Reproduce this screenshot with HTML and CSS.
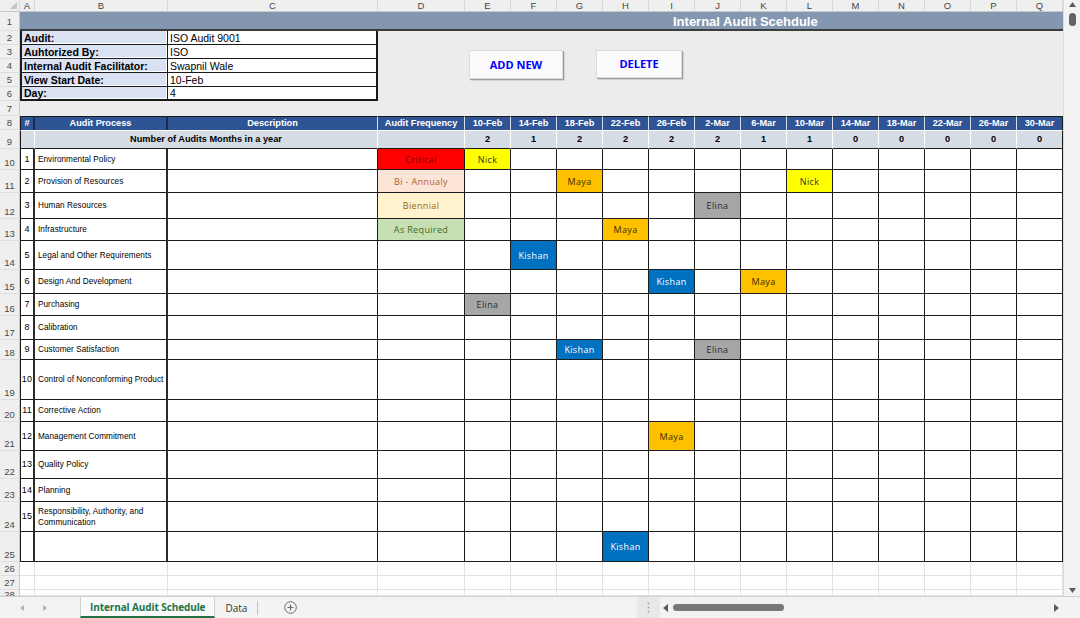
FILE: index.html
```html
<!DOCTYPE html>
<html lang="en">
<head>
<meta charset="utf-8">
<title>Internal Audit Schedule</title>
<link rel="stylesheet" href="styles.css">
</head>
<body>
<div class="app">
  <div class="main">
    <div class="sheet">
      <div class="row">
        <div class="corner"></div>
        <div class="ch">A</div><div class="ch">B</div><div class="ch">C</div><div class="ch">D</div>
        <div class="ch">E</div><div class="ch">F</div><div class="ch">G</div><div class="ch">H</div>
        <div class="ch">I</div><div class="ch">J</div><div class="ch">K</div><div class="ch">L</div>
        <div class="ch">M</div><div class="ch">N</div><div class="ch">O</div><div class="ch">P</div><div class="ch">Q</div>
      </div>

      <div class="row">
        <div class="rh mid">1</div>
        <div class="title">Internal Audit Scehdule</div>
      </div>

      <div class="row">
        <div class="rh">2</div>
        <div class="lbl">Audit:</div><div class="val">ISO Audit 9001</div><div class="fill"></div>
      </div>
      <div class="row">
        <div class="rh">3</div>
        <div class="lbl">Auhtorized By:</div><div class="val">ISO</div><div class="fill"></div>
      </div>
      <div class="row">
        <div class="rh">4</div>
        <div class="lbl">Internal Audit Facilitator:</div><div class="val">Swapnil Wale</div><div class="fill"></div>
      </div>
      <div class="row">
        <div class="rh">5</div>
        <div class="lbl">View Start Date:</div><div class="val">10-Feb</div><div class="fill"></div>
      </div>
      <div class="row">
        <div class="rh">6</div>
        <div class="lbl last">Day:</div><div class="val last">4</div><div class="fill"></div>
      </div>
      <div class="row">
        <div class="rh">7</div>
        <div class="fill all"></div>
      </div>

      <div class="row">
        <div class="rh">8</div>
        <div class="h first dk">#</div>
        <div class="h dk">Audit Process</div>
        <div class="h">Description</div>
        <div class="h">Audit Frequency</div>
        <div class="h">10-Feb</div><div class="h">14-Feb</div><div class="h">18-Feb</div><div class="h">22-Feb</div>
        <div class="h">26-Feb</div><div class="h">2-Mar</div><div class="h">6-Mar</div><div class="h">10-Mar</div>
        <div class="h">14-Mar</div><div class="h">18-Mar</div><div class="h">22-Mar</div><div class="h">26-Mar</div>
        <div class="h endc">30-Mar</div>
      </div>

      <div class="row">
        <div class="rh">9</div>
        <div class="s first"></div>
        <div class="s wide">Number of Audits Months in a year</div>
        <div class="s"></div>
        <div class="s">2</div><div class="s">1</div><div class="s">2</div><div class="s">2</div>
        <div class="s">2</div><div class="s">2</div><div class="s">1</div><div class="s">1</div>
        <div class="s">0</div><div class="s">0</div><div class="s">0</div><div class="s">0</div>
        <div class="s endc">0</div>
      </div>

      <div class="row">
        <div class="rh">10</div>
        <div class="d num">1</div><div class="d proc">Environmental Policy</div><div class="d desc"></div>
        <div class="d fq crit">Critical</div>
        <div class="d nm nick">Nick</div><div class="d"></div><div class="d"></div><div class="d"></div>
        <div class="d"></div><div class="d"></div><div class="d"></div><div class="d"></div>
        <div class="d"></div><div class="d"></div><div class="d"></div><div class="d"></div><div class="d endc"></div>
      </div>

      <div class="row">
        <div class="rh">11</div>
        <div class="d num">2</div><div class="d proc">Provision of Resources</div><div class="d desc"></div>
        <div class="d fq bi">Bi - Annualy</div>
        <div class="d"></div><div class="d"></div><div class="d nm maya">Maya</div><div class="d"></div>
        <div class="d"></div><div class="d"></div><div class="d"></div><div class="d nm nick">Nick</div>
        <div class="d"></div><div class="d"></div><div class="d"></div><div class="d"></div><div class="d endc"></div>
      </div>

      <div class="row">
        <div class="rh">12</div>
        <div class="d num">3</div><div class="d proc">Human Resources</div><div class="d desc"></div>
        <div class="d fq bien">Biennial</div>
        <div class="d"></div><div class="d"></div><div class="d"></div><div class="d"></div>
        <div class="d"></div><div class="d nm elina">Elina</div><div class="d"></div><div class="d"></div>
        <div class="d"></div><div class="d"></div><div class="d"></div><div class="d"></div><div class="d endc"></div>
      </div>

      <div class="row">
        <div class="rh">13</div>
        <div class="d num">4</div><div class="d proc">Infrastructure</div><div class="d desc"></div>
        <div class="d fq asreq">As Required</div>
        <div class="d"></div><div class="d"></div><div class="d"></div><div class="d nm maya">Maya</div>
        <div class="d"></div><div class="d"></div><div class="d"></div><div class="d"></div>
        <div class="d"></div><div class="d"></div><div class="d"></div><div class="d"></div><div class="d endc"></div>
      </div>

      <div class="row">
        <div class="rh">14</div>
        <div class="d num">5</div><div class="d proc">Legal and Other Requirements</div><div class="d desc"></div>
        <div class="d"></div>
        <div class="d"></div><div class="d nm kishan">Kishan</div><div class="d"></div><div class="d"></div>
        <div class="d"></div><div class="d"></div><div class="d"></div><div class="d"></div>
        <div class="d"></div><div class="d"></div><div class="d"></div><div class="d"></div><div class="d endc"></div>
      </div>

      <div class="row">
        <div class="rh">15</div>
        <div class="d num">6</div><div class="d proc">Design And Development</div><div class="d desc"></div>
        <div class="d"></div>
        <div class="d"></div><div class="d"></div><div class="d"></div><div class="d"></div>
        <div class="d nm kishan">Kishan</div><div class="d"></div><div class="d nm maya">Maya</div><div class="d"></div>
        <div class="d"></div><div class="d"></div><div class="d"></div><div class="d"></div><div class="d endc"></div>
      </div>

      <div class="row">
        <div class="rh">16</div>
        <div class="d num">7</div><div class="d proc">Purchasing</div><div class="d desc"></div>
        <div class="d"></div>
        <div class="d nm elina">Elina</div><div class="d"></div><div class="d"></div><div class="d"></div>
        <div class="d"></div><div class="d"></div><div class="d"></div><div class="d"></div>
        <div class="d"></div><div class="d"></div><div class="d"></div><div class="d"></div><div class="d endc"></div>
      </div>

      <div class="row">
        <div class="rh">17</div>
        <div class="d num">8</div><div class="d proc">Calibration</div><div class="d desc"></div>
        <div class="d"></div>
        <div class="d"></div><div class="d"></div><div class="d"></div><div class="d"></div>
        <div class="d"></div><div class="d"></div><div class="d"></div><div class="d"></div>
        <div class="d"></div><div class="d"></div><div class="d"></div><div class="d"></div><div class="d endc"></div>
      </div>

      <div class="row">
        <div class="rh">18</div>
        <div class="d num">9</div><div class="d proc">Customer Satisfaction</div><div class="d desc"></div>
        <div class="d"></div>
        <div class="d"></div><div class="d"></div><div class="d nm kishan">Kishan</div><div class="d"></div>
        <div class="d"></div><div class="d nm elina">Elina</div><div class="d"></div><div class="d"></div>
        <div class="d"></div><div class="d"></div><div class="d"></div><div class="d"></div><div class="d endc"></div>
      </div>

      <div class="row">
        <div class="rh">19</div>
        <div class="d num">10</div><div class="d proc">Control of Nonconforming Product</div><div class="d desc"></div>
        <div class="d"></div>
        <div class="d"></div><div class="d"></div><div class="d"></div><div class="d"></div>
        <div class="d"></div><div class="d"></div><div class="d"></div><div class="d"></div>
        <div class="d"></div><div class="d"></div><div class="d"></div><div class="d"></div><div class="d endc"></div>
      </div>

      <div class="row">
        <div class="rh">20</div>
        <div class="d num">11</div><div class="d proc">Corrective Action</div><div class="d desc"></div>
        <div class="d"></div>
        <div class="d"></div><div class="d"></div><div class="d"></div><div class="d"></div>
        <div class="d"></div><div class="d"></div><div class="d"></div><div class="d"></div>
        <div class="d"></div><div class="d"></div><div class="d"></div><div class="d"></div><div class="d endc"></div>
      </div>

      <div class="row">
        <div class="rh">21</div>
        <div class="d num">12</div><div class="d proc">Management Commitment</div><div class="d desc"></div>
        <div class="d"></div>
        <div class="d"></div><div class="d"></div><div class="d"></div><div class="d"></div>
        <div class="d nm maya">Maya</div><div class="d"></div><div class="d"></div><div class="d"></div>
        <div class="d"></div><div class="d"></div><div class="d"></div><div class="d"></div><div class="d endc"></div>
      </div>

      <div class="row">
        <div class="rh">22</div>
        <div class="d num">13</div><div class="d proc">Quality Policy</div><div class="d desc"></div>
        <div class="d"></div>
        <div class="d"></div><div class="d"></div><div class="d"></div><div class="d"></div>
        <div class="d"></div><div class="d"></div><div class="d"></div><div class="d"></div>
        <div class="d"></div><div class="d"></div><div class="d"></div><div class="d"></div><div class="d endc"></div>
      </div>

      <div class="row">
        <div class="rh">23</div>
        <div class="d num">14</div><div class="d proc">Planning</div><div class="d desc"></div>
        <div class="d"></div>
        <div class="d"></div><div class="d"></div><div class="d"></div><div class="d"></div>
        <div class="d"></div><div class="d"></div><div class="d"></div><div class="d"></div>
        <div class="d"></div><div class="d"></div><div class="d"></div><div class="d"></div><div class="d endc"></div>
      </div>

      <div class="row">
        <div class="rh">24</div>
        <div class="d num">15</div><div class="d proc">Responsibility, Authority, and Communication</div><div class="d desc"></div>
        <div class="d"></div>
        <div class="d"></div><div class="d"></div><div class="d"></div><div class="d"></div>
        <div class="d"></div><div class="d"></div><div class="d"></div><div class="d"></div>
        <div class="d"></div><div class="d"></div><div class="d"></div><div class="d"></div><div class="d endc"></div>
      </div>

      <div class="row">
        <div class="rh">25</div>
        <div class="d num"></div><div class="d proc"></div><div class="d desc"></div>
        <div class="d"></div>
        <div class="d"></div><div class="d"></div><div class="d"></div><div class="d nm kishan">Kishan</div>
        <div class="d"></div><div class="d"></div><div class="d"></div><div class="d"></div>
        <div class="d"></div><div class="d"></div><div class="d"></div><div class="d"></div><div class="d endc"></div>
      </div>

      <div class="row">
        <div class="rh">26</div>
        <div class="e"></div><div class="e"></div><div class="e"></div><div class="e"></div>
        <div class="e"></div><div class="e"></div><div class="e"></div><div class="e"></div>
        <div class="e"></div><div class="e"></div><div class="e"></div><div class="e"></div>
        <div class="e"></div><div class="e"></div><div class="e"></div><div class="e"></div><div class="e"></div>
      </div>
      <div class="row">
        <div class="rh">27</div>
        <div class="e"></div><div class="e"></div><div class="e"></div><div class="e"></div>
        <div class="e"></div><div class="e"></div><div class="e"></div><div class="e"></div>
        <div class="e"></div><div class="e"></div><div class="e"></div><div class="e"></div>
        <div class="e"></div><div class="e"></div><div class="e"></div><div class="e"></div><div class="e"></div>
      </div>
      <div class="row">
        <div class="rh top">28</div>
        <div class="e"></div><div class="e"></div><div class="e"></div><div class="e"></div>
        <div class="e"></div><div class="e"></div><div class="e"></div><div class="e"></div>
        <div class="e"></div><div class="e"></div><div class="e"></div><div class="e"></div>
        <div class="e"></div><div class="e"></div><div class="e"></div><div class="e"></div><div class="e"></div>
      </div>

      <button class="btn btn-add" type="button">ADD NEW</button>
      <button class="btn btn-del" type="button">DELETE</button>
    </div>

    <div class="vscroll">
      <svg class="varrow" width="7" height="5" viewBox="0 0 7 5"><path d="M3.5 0L7 5H0z"/></svg>
      <div class="vthumb"></div>
      <div class="vspace"></div>
      <svg class="varrow" width="7" height="5" viewBox="0 0 7 5"><path d="M0 0H7L3.5 5z"/></svg>
    </div>
  </div>

  <div class="tabbar">
    <div class="tabs">
      <div class="nav">
        <svg width="4" height="6" viewBox="0 0 4 6"><path d="M4 0V6L0 3z"/></svg>
        <svg width="4" height="6" viewBox="0 0 4 6"><path d="M0 0V6L4 3z"/></svg>
      </div>
      <div class="tab active">Internal Audit Schedule</div>
      <div class="tab">Data</div>
      <div class="tabsep"></div>
      <svg class="addsheet" width="13" height="13" viewBox="0 0 13 13">
        <circle cx="6.5" cy="6.5" r="5.8" fill="none" stroke="#6b6b6b" stroke-width="1"/>
        <path d="M6.5 3.5V9.5M3.5 6.5H9.5" stroke="#6b6b6b" stroke-width="1.2"/>
      </svg>
    </div>
    <div class="splitter">
      <svg width="3" height="11" viewBox="0 0 3 11"><circle cx="1.5" cy="1.5" r="1"/><circle cx="1.5" cy="5.5" r="1"/><circle cx="1.5" cy="9.5" r="1"/></svg>
    </div>
    <div class="hscroll">
      <svg class="harrow" width="5" height="8" viewBox="0 0 5 8"><path d="M5 0V8L0 4z"/></svg>
      <div class="hthumb"></div>
      <div class="hspace"></div>
      <svg class="harrow" width="5" height="8" viewBox="0 0 5 8"><path d="M0 0V8L5 4z"/></svg>
    </div>
    <div class="sbcorner"></div>
  </div>
</div>
</body>
</html>
```

FILE: styles.css
```css
* { box-sizing: border-box; margin: 0; padding: 0; }
html, body { width: 1080px; height: 618px; overflow: hidden; background: #fff; }
body { font-family: "Liberation Sans", Arial, sans-serif; color: #000; }

.app { display: flex; flex-direction: column; width: 1080px; height: 618px; }
.main { display: flex; height: 596px; }

.sheet {
  position: relative;
  display: grid;
  grid-template-columns: 20px 15px 133px 210px 87px repeat(13, 46px);
  grid-template-rows: 12px 19px 14px 14px 14px 14px 14px 15px 14px 19px 21px 23px 26px 22px 29px 24px 22px 24px 20px 40px 22px 29px 28px 23px 30px 30px 14px 14px 6px;
  width: 1063px;
  height: 596px;
  overflow: hidden;
  background: #fff;
}
.row { display: contents; }

/* column headers */
.corner { background: #efefef; border-right: 1px solid #d6d6d6; border-bottom: 1px solid #c9c9c9; position: relative; }
.corner::after {
  content: ""; position: absolute; right: 2px; bottom: 2px;
  border-left: 7px solid transparent; border-bottom: 7px solid #c4c4c4;
}
.ch {
  background: #efefef; border-right: 1px solid #d6d6d6; border-bottom: 1px solid #c9c9c9;
  display: flex; align-items: center; justify-content: center;
  font-size: 9.5px; color: #444; line-height: 1;
}

/* row headers */
.rh {
  background: #efefef; border-right: 1px solid #c9c9c9; border-bottom: 1px solid #dedede;
  display: flex; align-items: flex-end; justify-content: center;
  font-size: 9.5px; color: #4a4a4a; line-height: 10px; padding-bottom: 1px;
}
.rh.mid { align-items: center; padding-top: 2px; padding-bottom: 0; }
.rh.top { align-items: flex-start; padding-top: 0; }

/* title */
.title {
  grid-column: span 17;
  background: #8497b0;
  border-bottom: 2px solid #3c3c3c;
  color: #fff; font-weight: bold; font-size: 13px;
  display: flex; align-items: center; padding-left: 653px; padding-top: 2px;
}

/* info box */
.lbl {
  grid-column: span 2;
  background: #d9e1f2;
  border-left: 2px solid #1a1a1a; border-right: 1px solid #1a1a1a; border-bottom: 1px solid #1a1a1a;
  box-shadow: inset -1px -1px 0 #ffffff;
  font-weight: bold; font-size: 10.5px;
  display: flex; align-items: center; padding-left: 2px;
}
.val {
  border-right: 2px solid #1a1a1a; border-bottom: 1px solid #1a1a1a;
  font-size: 10.5px; display: flex; align-items: center; padding-left: 2px;
}
.lbl.last, .val.last { border-bottom-width: 2px; }
.fill { grid-column: span 14; background: #ececec; }
.fill.all { grid-column: span 17; }

/* header row 8 */
.h {
  background: #2f5496; color: #fff; font-weight: bold; font-size: 9.2px;
  border-top: 1px solid #1a1a1a; border-right: 1px solid #d5dcea;
  display: flex; align-items: center; justify-content: center; line-height: 1;
}
.h.dk { border-right: 2px solid #1b2c4f; }
.h.first { border-left: 1px solid #1a1a1a; }
.h.endc { border-right: 1px solid #1a1a1a; }

/* summary row 9 */
.s {
  background: #d6dce4; font-weight: bold; font-size: 9.2px;
  border-top: 1px solid #ffffff; border-right: 1px solid #ffffff; border-bottom: 1px solid #1a1a1a;
  display: flex; align-items: center; justify-content: center; line-height: 1;
}
.s.first { border-left: 1px solid #1a1a1a; }
.s.wide { grid-column: span 2; }
.s.endc { border-right: 1px solid #1a1a1a; }

/* data cells */
.d {
  border-right: 1px solid #1c1c1c; border-bottom: 1px solid #1c1c1c;
  display: flex; align-items: center; justify-content: center;
  font-size: 8.2px; line-height: 11px;
}
.d.num { border-left: 1px solid #1c1c1c; border-right: 2px solid #2a2a2a; font-size: 9px; letter-spacing: 0.2px; }
.d.proc { justify-content: flex-start; padding-left: 3px; padding-right: 2px; border-right: 2px solid #2a2a2a; letter-spacing: 0.05px; }

.fq, .nm { font-family: "Open Sans", "Liberation Sans", sans-serif; font-size: 9px; letter-spacing: 0.35px; }
.crit { background: #ff0000; color: #7a0000; }
.bi { background: #fce4d6; color: #b0622c; }
.bien { background: #fff2cc; color: #9a6a10; }
.asreq { background: #c6e0b4; color: #3f6a28; }

.nick { background: #ffff00; color: #333; }
.maya { background: #ffc000; color: #3a2e00; }
.kishan { background: #0070c0; color: #fff; }
.elina { background: #a6a6a6; color: #2b2b2b; }

/* empty grid */
.e { border-right: 1px solid #e1e1e1; border-bottom: 1px solid #e1e1e1; }

/* buttons (floating shapes) */
.btn {
  position: absolute; top: 50px; height: 29px;
  background: #fbfbfb;
  border: 1px solid #dcdcdc;
  box-shadow: 1px 1px 0 #9c9c9c, 2px 2px 0 #d2d2d2;
  font-family: "Open Sans", "Liberation Sans", sans-serif;
  font-weight: bold; font-size: 11px; color: #0000ff;
  display: flex; align-items: center; justify-content: center;
  cursor: pointer;
}
.btn-add { left: 469px; width: 94px; }
.btn-del { left: 596px; width: 86px; height: 28px; padding-bottom: 2px; }

/* vertical scrollbar */
.vscroll {
  width: 17px; height: 596px;
  background: #f2f2f2; border-left: 1px solid #dadada;
  display: flex; flex-direction: column; align-items: center;
  padding-top: 2px; padding-bottom: 3px;
}
.varrow { fill: #5c5c5c; display: block; }
.vthumb { width: 7px; height: 13px; margin-top: 6px; background: #636363; border-radius: 4px; }
.vspace { flex: 1; }

/* tab bar */
.tabbar {
  height: 22px; display: flex; background: #f3f3f3; border-top: 1px solid #d2d2d2;
}
.tabs { width: 637px; display: flex; align-items: stretch; }
.nav { width: 80px; display: flex; align-items: center; padding-left: 20px; gap: 19px; }
.nav svg { fill: #b5b5b5; display: block; }
.tab {
  display: flex; align-items: center;
  font-family: "Open Sans", "Liberation Sans", sans-serif; font-size: 10px; color: #333;
  padding: 0 10px;
}
.tab.active {
  padding: 0 9px;
  background: #fafafa;
  border-left: 1px solid #cfcfcf; border-right: 1px solid #cfcfcf;
  border-bottom: 2px solid #217346;
  color: #217346; font-weight: 700; letter-spacing: -0.1px;
}
.tabsep { width: 1px; height: 14px; background: #c2c2c2; align-self: center; }
.addsheet { align-self: center; margin-left: 26px; display: block; }

.splitter {
  width: 23px; background: #e8e8e8;
  display: flex; align-items: center; justify-content: center;
}
.splitter svg { fill: #a8a8a8; display: block; }

.hscroll { width: 403px; display: flex; align-items: center; padding-left: 3px; padding-right: 4px; }
.harrow { fill: #5c5c5c; display: block; }
.hthumb { width: 111px; height: 7px; margin-left: 5px; background: #787878; border-radius: 4px; }
.hspace { flex: 1; }
.sbcorner { width: 17px; background: #f3f3f3; }
```
